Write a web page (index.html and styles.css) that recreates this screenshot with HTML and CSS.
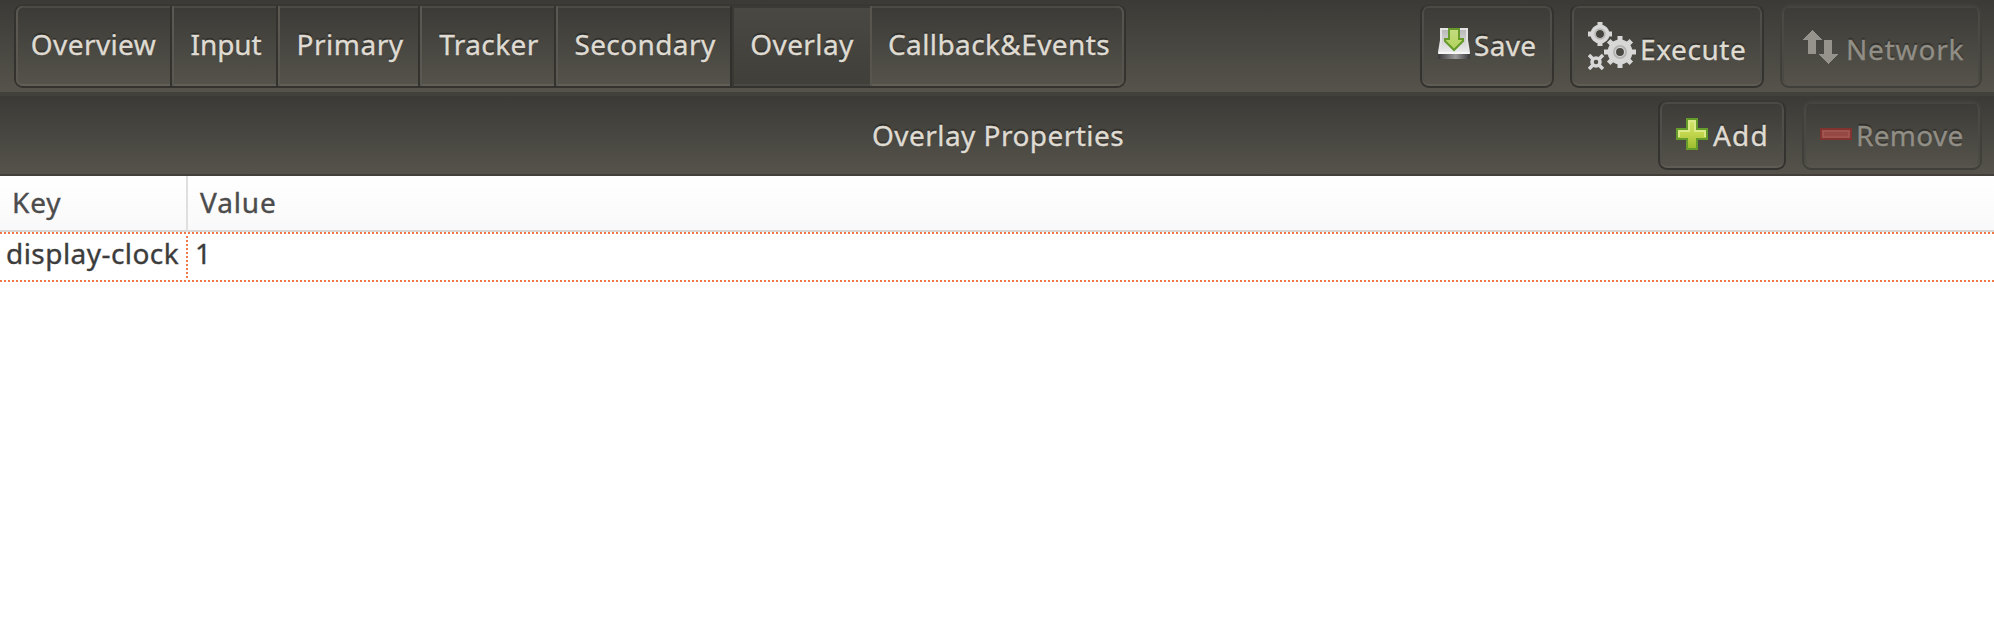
FILE: index.html
```html
<!DOCTYPE html>
<html lang="en">
<head>
<meta charset="utf-8">
<title>Overlay Properties</title>
<link rel="stylesheet" href="styles.css">
</head>
<body>
<header class="toolbar main-bar">
  <nav class="tabs">
    <button class="tab overview">Overview</button>
    <button class="tab input">Input</button>
    <button class="tab primary">Primary</button>
    <button class="tab tracker">Tracker</button>
    <button class="tab secondary">Secondary</button>
    <button class="tab overlay active">Overlay</button>
    <button class="tab callback">Callback&amp;Events</button>
  </nav>
  <div class="actions">
    <button class="btn save">
      <svg class="icon-save" width="32" height="32" viewBox="0 0 32 32">
        <defs>
          <linearGradient id="disk" x2="0" y2="1"><stop offset="0" stop-color="#b9b9b9"/><stop offset="1" stop-color="#ececec"/></linearGradient>
          <linearGradient id="base"><stop offset="0" stop-color="#3a3a3a"/><stop offset=".55" stop-color="#999"/><stop offset="1" stop-color="#3a3a3a"/></linearGradient>
          <linearGradient id="arrow" x2="0" y2="1"><stop offset="0" stop-color="#c3dc80"/><stop offset="1" stop-color="#b2d25a"/></linearGradient>
        </defs>
        <path d="M2 0H30V12L32 24V27H0V24L2 12Z" fill="#e4e4e4"/>
        <path d="M4 2H28V14L30 24H2L4 14Z" fill="url(#disk)"/>
        <path d="M1 24H31V26H1Z" fill="#f6f6f6"/>
        <path d="M0 26H32V31H0Z" fill="url(#base)"/>
        <path d="M11 1H21V11H25V13L16 22L7 13V11H11Z" fill="url(#arrow)" stroke="#669a2b" stroke-width="2"/>
      </svg><span>Save</span>
    </button>
    <button class="btn execute">
      <svg class="icon-gears" width="48" height="48" viewBox="0 0 48 48">
        <g fill="none" stroke="#d7d7d7">
          <circle cx="12" cy="12" r="6.8" stroke-width="5.6"/>
          <path d="M12 0V5M12 19V24M0 12H5M19 12H24" stroke-width="5"/>
          <circle cx="32" cy="30" r="8.2" stroke-width="8.5"/>
          <path d="M32 14V20M32 40V46M16 30H22M42 30H48M20.7 18.7L25 23M39 37L43.3 41.3M43.3 18.7L39 23M25 37L20.7 41.3" stroke-width="5"/>
          <circle cx="32" cy="30" r="6" stroke="#b4b4b2" stroke-width="2"/>
          <circle cx="12" cy="12" r="5" stroke="#b4b4b2" stroke-width="1.5"/>
          <circle cx="8" cy="40" r="4" stroke-width="3.5"/>
          <path d="M1 33L5 37M15 33L11 37M1 47L5 43M15 47L11 43" stroke-width="3.5"/>
        </g>
      </svg><span>Execute</span>
    </button>
    <button class="btn network" disabled>
      <svg class="icon-network" width="36" height="34" viewBox="0 0 36 34" shape-rendering="crispEdges">
        <path d="M10 0L20 10H14V24H6V10H0ZM22 10H30V24H36L26 34L16 24H22Z" fill="#96938c"/>
      </svg><span>Network</span>
    </button>
  </div>
</header>
<section class="toolbar sub-bar">
  <h1 class="title">Overlay Properties</h1>
  <div class="actions">
    <button class="btn add">
      <svg width="32" height="32" viewBox="0 0 32 32">
        <defs><linearGradient id="plus" x2="0" y2="1"><stop offset="0" stop-color="#d5e573"/><stop offset=".5" stop-color="#c1d54d"/><stop offset="1" stop-color="#9bbb2d"/></linearGradient></defs>
        <path d="M11 1H21V11H31V21H21V31H11V21H1V11H11Z" fill="url(#plus)" stroke="#669c2c" stroke-width="2"/>
        <path d="M3 19V13H13V3H19V13H29V19" fill="none" stroke="#dce989" stroke-width="2"/>
      </svg><span>Add</span>
    </button>
    <button class="btn remove" disabled>
      <svg width="32" height="12" viewBox="0 0 32 12">
        <path d="M1 1H31V11H1Z" fill="#954844" stroke="#82332f" stroke-width="2"/>
        <path d="M3 9V3H29V9Z" fill="none" stroke="#a05450" stroke-width="2"/>
      </svg><span>Remove</span>
    </button>
  </div>
</section>
<main class="grid">
  <div class="cell head key">Key</div>
  <div class="cell head value">Value</div>
  <div class="cell data name">display-clock</div>
  <div class="cell data number">1</div>
</main>
</body>
</html>
```
FILE: styles.css
```css
* { box-sizing: border-box; }

body {
  margin: 0;
  background: #fff;
  font: 28px/34px "Noto Sans", "Open Sans", sans-serif;
  color: #4c4c4c;
  -webkit-text-stroke: .35px;
  overflow: hidden;
}

.toolbar {
  display: flex;
  justify-content: space-between;
  padding: 4px 12px 0 14px;
  background: linear-gradient(#3b3a36, #55534b);
  color: #dfdbd2;
}
.main-bar { height: 96px; border-bottom: 4px solid #43413c; }
.sub-bar { height: 80px; border-bottom: 2px solid #43403c; }

button {
  appearance: none;
  margin: 0;
  border: 0;
  padding: 0;
  background: none;
  font: inherit;
  color: inherit;
  text-shadow: 0 -2px 1px rgba(0, 0, 0, .35);
}

.tabs {
  display: grid;
  grid-template-columns: 156px 106px 142px 136px 174px 140px 1fr;
  width: 1112px;
  height: 84px;
  border: 2px solid #33322e;
  border-top-color: #383733;
  border-radius: 9px;
}
.tab {
  padding: 0 0 5px 4px;
  border-right: 2px solid #33322e;
  background: linear-gradient(#3b3a36, #55534b);
  box-shadow: inset 2px 0 #5a5851, inset 0 2px #4b4a45, inset 0 -2px #625f58;
  letter-spacing: .4px;
}
.tab:first-child { padding-left: 1px; border-radius: 7px 0 0 7px; }
.tab:last-child {
  border-right: 0;
  border-radius: 0 7px 7px 0;
  box-shadow: inset 2px 0 #57554d, inset -2px 0 #56544d, inset 0 2px #4b4a45, inset 0 -2px #625f58;
}
.input { letter-spacing: -.1px; }
.primary { letter-spacing: .5px; }
.secondary { border-right: 0; }
.tab.active {
  border-right: 0;
  background: linear-gradient(#4a4842, #403f3a);
  box-shadow: inset 2px 0 #31302c, inset 4px 0 #3a3934, inset 0 2px #3b3a36, inset 0 -2px #4b4943;
}

.actions { display: flex; gap: 16px; }
.btn {
  display: flex;
  align-items: flex-start;
  height: 84px;
  border: 2px solid #34332f;
  border-top-color: #393834;
  border-radius: 9px;
  background: linear-gradient(#3c3b37, #55534b);
  box-shadow: inset 0 2px #4b4a45, inset 0 -2px #5f5c55, inset 2px 0 #504e48, inset -2px 0 #504e48;
  letter-spacing: .6px;
}
.btn:disabled {
  border-color: #403f3a;
  box-shadow: inset 0 2px #454440, inset 0 -2px #56544d, inset 2px 0 #4b4943, inset -2px 0 #4b4943;
  color: #918e86;
}
.btn svg { display: block; flex: none; }
.save { width: 134px; padding: 22px 0 0 16px; }
.save span { margin: 0 0 0 4px; letter-spacing: .3px; }
.execute { width: 194px; padding: 16px 0 0 16px; }
.execute span { margin: 10px 0 0 4px; }
.network { width: 202px; padding: 24px 0 0 20px; letter-spacing: .8px; }
.network span { margin: 2px 0 0 8px; }

.sub-bar .btn { height: 70px; }
.add { width: 128px; padding: 16px 0 0 16px; letter-spacing: 1.2px; }
.add span { margin: 0 0 0 5px; }
.remove { width: 180px; padding: 26px 0 0 16px; letter-spacing: .3px; }
.remove span { margin: -10px 0 0 4px; }

.title {
  margin: 18px 0 0 858px;
  font-size: 28px;
  font-weight: 400;
  letter-spacing: .45px;
  text-shadow: 0 -2px 1px rgba(0, 0, 0, .35);
}

.grid {
  display: grid;
  grid-template-columns: 188px 1fr;
  grid-template-rows: 56px 50px;
}
.head {
  padding: 9px 12px 0;
  border-bottom: 2px solid #d9d7d6;
  background: linear-gradient(#fff, #f9f9f9);
}
.head.key { border-right: 2px solid #dfdfdf; letter-spacing: .9px; }
.value { letter-spacing: .9px; }
.data {
  padding: 4px 7px 0;
  background:
    repeating-linear-gradient(90deg, #f07746 0 2px, #fff 2px 4px) 0 0 / 100% 2px no-repeat,
    repeating-linear-gradient(90deg, #f07746 0 2px, #fff 2px 4px) 0 100% / 100% 2px no-repeat;
  color: #3c3c3c;
}
.name {
  padding-left: 6px;
  letter-spacing: .45px;
  background:
    repeating-linear-gradient(90deg, #f07746 0 2px, #fff 2px 4px) 0 0 / 100% 2px no-repeat,
    repeating-linear-gradient(90deg, #f07746 0 2px, #fff 2px 4px) 0 100% / 100% 2px no-repeat,
    repeating-linear-gradient(#f07746 0 2px, #fff 2px 4px) 100% 0 / 2px 100% no-repeat;
}
```
